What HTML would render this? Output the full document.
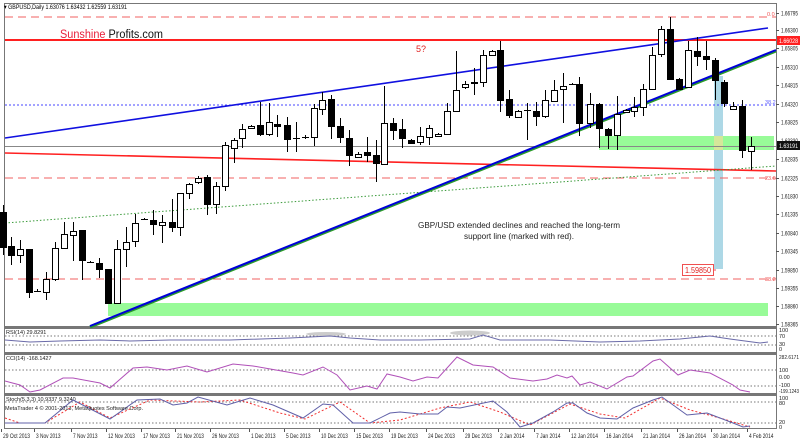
<!DOCTYPE html>
<html><head><meta charset="utf-8"><style>
html,body{margin:0;padding:0;background:#fff}
svg{display:block}
text{font-family:"Liberation Sans",sans-serif}
</style></head><body>
<svg id="s" width="800" height="440" viewBox="0 0 800 440" xmlns="http://www.w3.org/2000/svg">
<rect width="800" height="440" fill="#fff"/>
<rect x="4.5" y="3.5" width="772" height="323" fill="none" stroke="#777"/>
<rect x="4.5" y="328.5" width="772" height="24" fill="none" stroke="#777"/>
<rect x="4.5" y="354.5" width="772" height="39" fill="none" stroke="#777"/>
<rect x="4.5" y="395.5" width="772" height="33" fill="none" stroke="#777"/>
<line x1="4" y1="327.5" x2="777" y2="327.5" stroke="#777"/>
<line x1="4" y1="353.5" x2="777" y2="353.5" stroke="#777"/>
<line x1="4" y1="394.5" x2="777" y2="394.5" stroke="#777"/>
<rect x="108" y="303" width="660" height="13" fill="#98fb98"/>
<rect x="599" y="136" width="175" height="14" fill="#98fb98"/>
<rect x="714" y="76" width="9" height="193" fill="#add8e6"/>
<rect x="714" y="136" width="9" height="14" fill="#d6e79a"/>
<line x1="5" y1="17" x2="776" y2="17" stroke="#f06060" stroke-dasharray="8,5"/>
<line x1="5" y1="178" x2="776" y2="178" stroke="#f06060" stroke-dasharray="8,5"/>
<line x1="5" y1="279" x2="776" y2="279" stroke="#f06060" stroke-dasharray="8,5"/>
<line x1="5" y1="105" x2="776" y2="105" stroke="#4444ff" stroke-dasharray="2,2"/>
<line x1="5" y1="146.5" x2="776" y2="146.5" stroke="#888"/>
<line x1="5" y1="40" x2="776" y2="40" stroke="#ff2020" stroke-width="2"/>
<line x1="5" y1="153" x2="776" y2="171" stroke="#ff2020" stroke-width="1.6"/>
<line x1="5" y1="223" x2="776" y2="166" stroke="#3a9a3a" stroke-dasharray="1.5,2"/>
<line x1="5" y1="138" x2="768" y2="28" stroke="#1010e0" stroke-width="1.6"/>
<line x1="90" y1="327" x2="776" y2="51" stroke="#2a9a2a" stroke-width="3"/>
<line x1="90" y1="326" x2="776" y2="50" stroke="#0000d8" stroke-width="2"/>
<g id="candles"></g>
<text x="4" y="9" font-size="6.5" fill="#000" textLength="123" lengthAdjust="spacingAndGlyphs">▾ GBPUSD,Daily  1.63076 1.63432 1.62559 1.63191</text>
<text x="60" y="38" font-size="11.5" fill="#e8203a" textLength="103" lengthAdjust="spacingAndGlyphs">Sunshine <tspan fill="#111">Profits.com</tspan></text>
<text x="416" y="52" font-size="9" fill="#e02020">5?</text>
<text x="519" y="228" font-size="8.2" fill="#222" text-anchor="middle" textLength="202" lengthAdjust="spacingAndGlyphs">GBP/USD extended declines and reached the long-term</text>
<text x="519" y="239" font-size="8.2" fill="#222" text-anchor="middle" textLength="110" lengthAdjust="spacingAndGlyphs">support line (marked with red).</text>
<rect x="682.5" y="264.5" width="31" height="11" fill="#fff" stroke="#f05050"/>
<text x="685" y="273" font-size="8" fill="#e02020" textLength="26" lengthAdjust="spacingAndGlyphs">1.59850</text>
<line x1="713" y1="270" x2="716" y2="270" stroke="#f05050"/>
<text x="767" y="16" font-size="5.5" fill="#f05050">0.0</text>
<text x="765" y="104" font-size="5.5" fill="#6060ff">38.2</text>
<text x="765" y="180" font-size="5.5" fill="#f05050">23.6</text>
<text x="765" y="281" font-size="5.5" fill="#f05050">38.2</text>
<g id="axis" font-size="6" fill="#222"></g>
<rect x="777" y="36" width="23" height="9" fill="#ff2020"/>
<text x="779" y="43" font-size="6" fill="#fff" textLength="19" lengthAdjust="spacingAndGlyphs">1.66028</text>
<rect x="777" y="141" width="23" height="9" fill="#111"/>
<text x="779" y="148" font-size="6" fill="#fff" textLength="19" lengthAdjust="spacingAndGlyphs">1.63191</text>
<text x="6" y="334" font-size="5.5" fill="#222">RSI(14) 29.8291</text>
<line x1="5" y1="336" x2="776" y2="336" stroke="#777" stroke-dasharray="1.5,2"/>
<line x1="5" y1="345" x2="776" y2="345" stroke="#777" stroke-dasharray="1.5,2"/>
<ellipse cx="326" cy="334" rx="20" ry="2" fill="#ccc"/>
<ellipse cx="470" cy="333" rx="20" ry="2.5" fill="#ccc"/>
<polyline fill="none" stroke="#6a6aa8" points="5,340 30,342 60,341 100,340 130,341 170,340 230,340 290,338 330,336 350,338 380,340 420,340 470,339 483,335 500,340 550,340 600,342 640,341 680,339 710,336 730,339 760,343 768,342"/>
<text x="6" y="360" font-size="5.5" fill="#222">CCI(14) -168.1427</text>
<line x1="5" y1="370" x2="776" y2="370" stroke="#777" stroke-dasharray="1.5,2"/>
<line x1="5" y1="386" x2="776" y2="386" stroke="#777" stroke-dasharray="1.5,2"/>
<polyline fill="none" stroke="#b050b8" points="5,381 20,385 30,392 40,390 63,378 73,378 100,383 110,388 133,368 147,367 167,370 187,366 207,372 233,364 253,366 293,373 303,375 323,367 337,375 350,390 367,386 377,389 387,374 400,377 413,381 427,377 438,378 457,357 473,365 493,367 510,378 533,381 547,379 557,375 567,378 572,376 580,385 590,382 607,389 627,377 633,376 653,361 660,359 678,375 690,370 710,373 733,385 740,390 750,392"/>
<text x="6" y="401" font-size="5.5" fill="#222">Stoch(5,3,3) 10.9337 9.3240</text>
<line x1="5" y1="402" x2="776" y2="402" stroke="#777" stroke-dasharray="1.5,2"/>
<line x1="5" y1="423" x2="776" y2="423" stroke="#777" stroke-dasharray="1.5,2"/>
<polyline fill="none" stroke="#f03030" stroke-dasharray="2,2" points="5,418 20,423 45,423 80,402 110,418 150,400 200,402 240,400 280,413 305,419 340,402 370,423 400,420 440,408 470,402 500,412 530,425 570,404 600,414 625,418 660,398 690,410 720,418 750,427"/>
<polyline fill="none" stroke="#6060a8" points="5,423 45,423 73,400 110,419 137,400 160,399 173,405 187,403 198,397 227,405 250,398 273,405 303,418 323,404 333,405 353,423 370,423 390,413 400,412 420,414 438,414 447,407 460,408 493,401 507,412 520,427 533,423 553,412 567,403 573,403 587,413 600,418 617,419 633,408 653,400 662,397 687,415 707,413 733,423 743,427 750,426"/>
<text x="5" y="410" font-size="5.5" fill="#222" textLength="138" lengthAdjust="spacingAndGlyphs">MetaTrader 4 © 2001-2013, MetaQuotes Software Corp.</text>
<g font-size="5.5" fill="#222">
<text x="779" y="332">100</text><text x="779" y="338">70</text><text x="779" y="346">30</text><text x="779" y="351">0</text>
<text x="779" y="359" textLength="20" lengthAdjust="spacingAndGlyphs">282.6171</text><text x="779" y="372">100</text><text x="779" y="379">0.00</text><text x="779" y="387">-100</text><text x="779" y="393" textLength="20" lengthAdjust="spacingAndGlyphs">-199.1243</text>
<text x="779" y="400">100</text><text x="779" y="405">80</text><text x="779" y="424">20</text><text x="779" y="429">0</text>
</g>
<g id="dates" font-size="6" fill="#222"></g>
</svg>
<script>
var NS="http://www.w3.org/2000/svg";
function el(p,t,a,txt){var e=document.createElementNS(NS,t);for(var k in a)e.setAttribute(k,a[k]);if(txt)e.textContent=txt;p.appendChild(e);return e;}
var C=[[3,'b',212,247,205,255],[11,'b',246,255,237,265],[20,'w',249,255,240,263],[29,'b',249,292,249,298],[37,'d',291,291,289,292],[46,'w',279,292,272,300],[55,'w',248,279,242,281],[64,'w',234,248,222,248],[73,'w',231,235,222,261],[82,'b',230,260,230,280],[90,'d',262,262,261,263],[99,'b',263,269,258,278],[108,'b',269,303,269,303],[117,'w',249,303,240,304],[126,'w',242,249,227,267],[135,'w',223,241,214,247],[144,'d',219,219,218,220],[153,'b',220,224,210,235],[162,'w',222,225,215,243],[172,'b',222,227,199,232],[180,'w',193,227,193,236],[189,'w',184,193,183,199],[198,'w',178,182,176,184],[207,'b',177,204,175,215],[216,'w',186,204,182,214],[225,'w',145,186,142,191],[234,'w',140,148,138,163],[242,'w',129,138,124,148],[251,'w',126,128,125,129],[260,'b',125,134,102,136],[269,'w',122,134,103,136],[277,'b',124,126,115,137],[287,'b',125,139,117,152],[296,'d',138,138,122,152],[305,'d',137,137,135,139],[314,'w',108,137,104,146],[322,'w',100,109,92,115],[331,'b',99,126,95,139],[340,'b',126,137,118,143],[349,'b',138,155,130,166],[358,'w',154,157,152,158],[367,'b',152,155,137,162],[376,'b',155,163,140,182],[384,'w',123,164,86,165],[393,'b',123,130,118,140],[402,'b',129,138,119,148],[411,'b',140,143,139,144],[420,'w',136,142,127,145],[429,'w',128,137,125,145],[438,'w',134,136,133,137],[447,'w',111,134,103,135],[456,'w',90,111,51,111],[465,'w',84,87,81,89],[474,'w',82,83,68,95],[483,'w',55,82,50,87],[492,'w',51,55,50,56],[500,'b',50,100,41,112],[509,'b',99,115,90,118],[518,'w',111,117,110,118],[527,'d',110,110,103,140],[536,'b',111,116,102,126],[545,'w',100,116,90,118],[554,'w',90,101,80,102],[563,'w',86,89,73,123],[572,'d',84,84,83,85],[579,'b',84,123,77,136],[590,'w',104,123,93,128],[599,'b',104,128,103,148],[608,'b',129,135,128,149],[617,'w',114,135,96,150],[626,'w',110,112,109,113],[634,'w',107,111,97,117],[643,'w',89,107,84,116],[652,'w',55,89,47,90],[661,'w',29,54,26,57],[670,'b',29,79,17,80],[679,'b',79,89,78,90],[688,'w',50,87,41,88],[697,'b',51,56,37,66],[706,'b',56,59,41,70],[715,'b',60,80,58,100],[724,'b',82,103,80,107],[733,'w',106,109,102,110],[742,'b',106,150,100,158],[751,'w',146,151,137,170]];
var g=document.getElementById('candles');
C.forEach(function(c){var x=c[0];
el(g,'line',{x1:x+.5,y1:c[4],x2:x+.5,y2:c[5],stroke:'#000'});
if(c[1]=='d'){el(g,'line',{x1:x-3,y1:c[2]+.5,x2:x+4,y2:c[2]+.5,stroke:'#000'});}
else el(g,'rect',{x:x-2.5,y:c[2]+.5,width:6,height:Math.max(1,c[3]-c[2]),fill:c[1]=='b'?'#000':'#fff',stroke:'#000'});
});
var ax=document.getElementById('axis');
var L=[[13,'1.66795'],[30,'1.66300'],[48,'1.65805'],[67,'1.65310'],[85,'1.64815'],[104,'1.64320'],[122,'1.63825'],[159,'1.62835'],[178,'1.62325'],[196,'1.61830'],[214,'1.61335'],[233,'1.60840'],[251,'1.60345'],[270,'1.59850'],[288,'1.59355'],[306,'1.58860'],[324,'1.58365']];
L.forEach(function(l){el(ax,'line',{x1:776,y1:l[0]+.5,x2:779,y2:l[0]+.5,stroke:'#555'});el(ax,'text',{x:781,y:l[0]+2.5,textLength:17,lengthAdjust:'spacingAndGlyphs'},l[1]);});
el(ax,'text',{x:781,y:143,textLength:17,lengthAdjust:'spacingAndGlyphs'},'1.63330');
var D=[[3,'29 Oct 2013'],[36,'3 Nov 2013'],[73,'7 Nov 2013'],[108,'12 Nov 2013'],[143,'17 Nov 2013'],[177,'21 Nov 2013'],[212,'26 Nov 2013'],[251,'1 Dec 2013'],[286,'5 Dec 2013'],[321,'10 Dec 2013'],[356,'15 Dec 2013'],[391,'19 Dec 2013'],[428,'24 Dec 2013'],[465,'29 Dec 2013'],[500,'2 Jan 2014'],[536,'7 Jan 2014'],[571,'12 Jan 2014'],[606,'16 Jan 2014'],[643,'21 Jan 2014'],[679,'26 Jan 2014'],[713,'30 Jan 2014'],[749,'4 Feb 2014']];
var dg=document.getElementById('dates');
D.forEach(function(d){var n=d[1].length;el(dg,'line',{x1:d[0]-1.5,y1:429,x2:d[0]-1.5,y2:432,stroke:'#555'});el(dg,'text',{x:d[0],y:438,textLength:n*2.45,lengthAdjust:'spacingAndGlyphs'},d[1]);});
</script>
</body></html>
